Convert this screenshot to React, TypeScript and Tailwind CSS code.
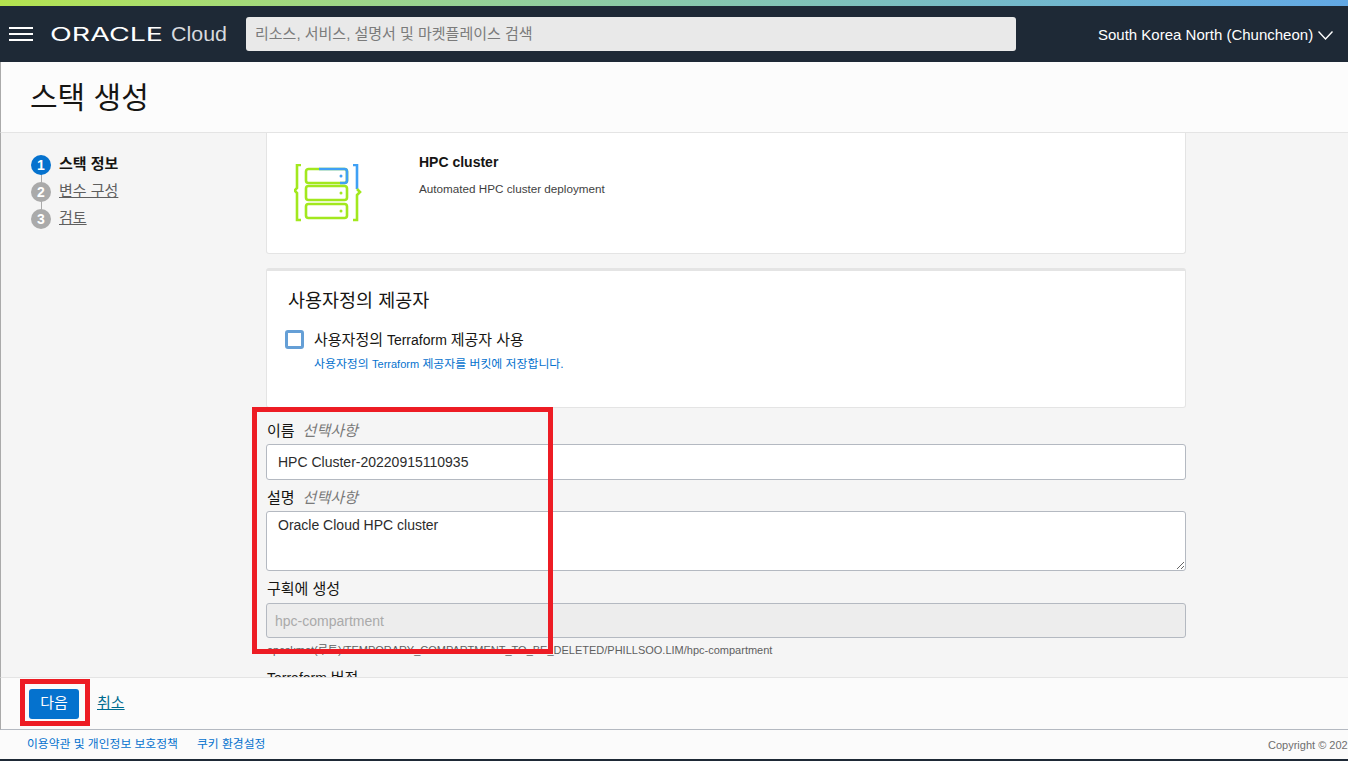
const font = "font-['Liberation_Sans','Noto_Sans_CJK_KR',sans-serif]";

function StackIcon() {
  return (
    <svg width="68" height="58" viewBox="0 0 68 58" fill="none" strokeWidth="2.6">
      <path d="M7 1H3V24L0.500 26.500L3 29V56H7" stroke="#a2e81e" />
      <path d="M59 1H63V25" stroke="#3fa0f5" />
      <path d="M63 25L66 28L63 31V56H59" stroke="#a2e81e" />
      <rect x="12" y="5" width="41" height="14" rx="2.5" stroke="#a2e81e" />
      <path d="M25 5H50.500Q53 5 53 7.500V16.500Q53 19 50.500 19H46" stroke="#3fa0f5" />
      <rect x="12" y="22" width="41" height="14" rx="2.5" stroke="#a2e81e" />
      <rect x="12" y="40" width="41" height="14" rx="2.5" stroke="#a2e81e" />
      <circle cx="47" cy="12" r="1.500" fill="#3fa0f5" />
      <circle cx="47" cy="29" r="1.500" fill="#a2e81e" />
      <circle cx="47" cy="47" r="1.500" fill="#a2e81e" />
    </svg>
  );
}

function Step({ n, label, active }: { n: number; label: string; active?: boolean }) {
  return (
    <div className="flex h-[27px] items-center">
      <span className={`flex h-5 w-5 items-center justify-center rounded-full text-sm font-bold text-white ${active ? 'bg-[#0572ce]' : 'bg-[#aaaaaa]'}`}>{n}</span>
      <span className={`ml-2 text-[15px] ${active ? 'font-bold text-[#161513]' : 'text-[#5f5f5f] underline'}`}>{label}</span>
    </div>
  );
}

export default function App() {
  return (
    <div className={`relative flex h-[761px] w-[1348px] flex-col overflow-hidden bg-[#f5f5f5] ${font}`}>
      <div className="h-[6px] bg-gradient-to-r from-[#b4e34e] to-[#62a8e5]" />
      <header className="flex h-[56px] items-center bg-[#1e2936] text-white">
        <svg className="ml-[9px]" width="24" height="14" viewBox="0 0 24 14" stroke="#fff" strokeWidth="2">
          <path d="M0 1H24M0 7H24M0 13H24" />
        </svg>
        <svg className="ml-[17px]" width="180" height="24" viewBox="0 0 180 24">
          <text x="0" y="19" fill="#fff" fontSize="18" fontFamily="Inter" fontWeight="400" textLength="113" lengthAdjust="spacingAndGlyphs">ORACLE</text>
          <text x="121" y="19" fill="#d8dade" fontSize="21" fontFamily="Liberation Sans" textLength="56" lengthAdjust="spacingAndGlyphs">Cloud</text>
        </svg>
        <div className="ml-[16px] flex h-[34px] w-[770px] items-center rounded-[3px] bg-[#e9e9e9] pl-[9px] text-[15px] text-[#7b7b7b]">
          리소스, 서비스, 설명서 및 마켓플레이스 검색
        </div>
        <div className="ml-[82px] flex items-center pt-[2px] text-[15px]">
          South Korea North (Chuncheon)
          <svg className="ml-[5px]" width="15" height="9" viewBox="0 0 15 9" fill="none" stroke="#fff" strokeWidth="1.400">
            <path d="M0.500 0.500L7.500 8L14.500 0.500" />
          </svg>
        </div>
      </header>
      <div className="flex h-[71px] items-center border-b border-l border-b-[#e4e4e4] border-l-[#aaaaaa] bg-[#fcfcfc] pl-[29px] text-[30px] text-[#161513]">
        스택 생성
      </div>
      <main className="flex h-[544px] overflow-hidden border-l border-l-[#aaaaaa]">
        <aside className="w-[265px] shrink-0 pl-[30px] pt-[18px]">
          <div className="relative">
            <div className="absolute left-[10px] top-[20px] h-[45px] w-px bg-[#aaaaaa]" />
            <div className="relative">
              <Step n={1} label="스택 정보" active />
              <Step n={2} label="변수 구성" />
              <Step n={3} label="검토" />
            </div>
          </div>
        </aside>
        <div className="w-[920px] shrink-0">
          <section className="flex h-[121px] rounded-b-[3px] border border-t-0 border-[#e4e4e4] bg-white">
            <div className="ml-[27px] mt-[31px]"><StackIcon /></div>
            <div className="ml-[57px] pt-[19px]">
              <div className="text-sm font-bold text-[#161513]">HPC cluster</div>
              <div className="mt-[9px] text-[11.7px] leading-4 text-[#3f3f3f]">Automated HPC cluster deployment</div>
            </div>
          </section>
          <section className="mt-[14px] h-[140px] rounded-[3px] border border-t-[3px] border-[#e4e4e4] bg-white pl-[21px] pt-[18px]">
            <h2 className="text-[18.500px] leading-[24px] text-[#161513]">사용자정의 제공자</h2>
            <div className="mt-[16px] flex">
              <span className="-ml-[3px] mt-[1px] h-[19px] w-[19px] rounded-[3px] border-[3px] border-[#659fd6] bg-white" />
              <div className="ml-[10px] pt-px">
                <div className="text-sm leading-[20px] text-[#161513]"><span className="text-[15px]">사용자정의</span> Terraform <span className="text-[15px]">제공자 사용</span></div>
                <div className="mt-[7px] text-[11.900px] leading-[14px] text-[#0572ce]">사용자정의 <span className="text-[11px]">Terraform</span> 제공자를 버킷에 저장합니다.</div>
              </div>
            </div>
          </section>
          <div className="mt-[13px] flex h-[20px] items-center pl-px text-[15px] text-[#161513]">
            이름<em className="ml-[8px] text-[#7a7a7a]">선택사항</em>
          </div>
          <div className="mt-[3px] flex h-[36px] items-center rounded-[3px] border border-[#b4b9c1] bg-white pl-[11px] text-sm text-[#2c2c2c]">
            HPC Cluster-20220915110935
          </div>
          <div className="mt-[8px] flex h-[20px] items-center pl-px text-[15px] text-[#161513]">
            설명<em className="ml-[8px] text-[#7a7a7a]">선택사항</em>
          </div>
          <textarea
            readOnly
            defaultValue="Oracle Cloud HPC cluster"
            className="mt-[3px] block h-[60px] w-full rounded-[3px] border border-[#b4b9c1] bg-white pl-[11px] pt-[3px] text-sm text-[#2c2c2c]"
          />
          <div className="mt-[8px] flex h-[20px] items-center pl-px text-[15px] text-[#161513]">구획에 생성</div>
          <div className="mt-[4px] flex h-[35px] items-center rounded-[3px] border border-[#b4b9c1] bg-[#ededed] pl-[8px] pt-px text-sm text-[#aaaaaa]">
            hpc-compartment
          </div>
          <div className="mt-[5px] pl-px text-[11px] leading-[14px] text-[#5f5f5f]">
            opcskmot(루트)/TEMPORARY_COMPARTMENT_TO_BE_DELETED/PHILLSOO.LIM/hpc-compartment
          </div>
          <div className="mt-[11px] pl-px text-sm leading-[20px] text-[#161513]">Terraform <span className="text-[15px]">버전</span></div>
        </div>
      </main>
      <div className="flex h-[53px] items-center border-y border-l border-t-[#e4e4e4] border-b-[#b4b9c1] border-l-[#aaaaaa] bg-[#fbfbfb] pl-[28px]">
        <button className="h-[30px] w-[50px] rounded-[3px] bg-[#0572ce] text-[15px] text-white">다음</button>
        <a className="ml-[18px] text-[15px] text-[#006b8f] underline">취소</a>
      </div>
      <footer className="flex h-[29px] items-center whitespace-nowrap bg-[#fbfbfb] pl-[27px] pt-px text-[11.800px] text-[#0572ce]">
        <span>이용약관 및 개인정보 보호정책</span>
        <span className="ml-[19px]">쿠키 환경설정</span>
        <span className="ml-auto w-[80px] overflow-hidden text-[11px] text-[#6f6f6f]">Copyright © 2022, Oracle</span>
      </footer>
      <div className="h-[2px] bg-[#1e2936]" />
      {/* red annotation boxes */}
      <div className="absolute left-[252px] top-[407px] h-[247px] w-[301px] border-[5px] border-[#ed1c24]" />
      <div className="absolute left-[20px] top-[679px] h-[47px] w-[70px] border-[5px] border-[#ed1c24]" />
    </div>
  );
}
